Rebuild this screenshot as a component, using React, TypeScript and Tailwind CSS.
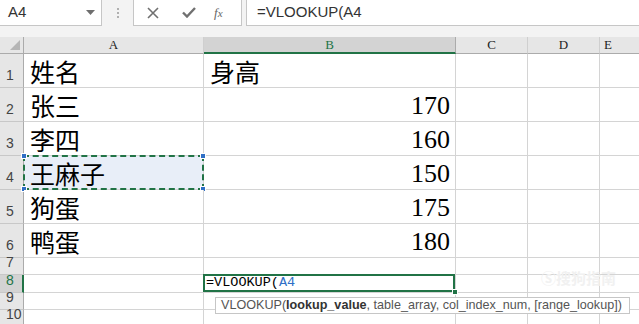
import React from 'react';

const ROWS: { a: string; b: string; num?: boolean }[] = [
  { a: '姓名', b: '身高' },
  { a: '张三', b: '170', num: true },
  { a: '李四', b: '160', num: true },
  { a: '王麻子', b: '150', num: true },
  { a: '狗蛋', b: '175', num: true },
  { a: '鸭蛋', b: '180', num: true },
];

const cjk = { fontFamily: '"Noto Sans CJK SC", sans-serif' };
const serif = { fontFamily: '"Liberation Serif", serif' };
const sans = { fontFamily: '"Liberation Sans", Arial, sans-serif' };
const mono = { fontFamily: '"Liberation Mono", monospace' };

const Handle: React.FC<{ className: string }> = ({ className }) => (
  <div className={`absolute w-[6px] h-[6px] bg-[#2f6fc6] border border-white ${className}`} />
);

const RowHead: React.FC<{ n: number; h: string; active?: boolean }> = ({ n, h, active }) => (
  <div
    className={`${h} flex items-end pl-[6px] pb-[1px] text-[14px] border-b border-[#c8c8c8] ${
      active ? 'bg-[#d3d3d3] text-[#217346] border-r-2 border-r-[#217346]' : 'bg-[#e6e6e6] text-[#444] border-r border-r-[#ababab]'
    }`}
    style={sans}
  >
    {n}
  </div>
);

const Blank: React.FC<{ h: string }> = ({ h }) => <div className={`${h} border-r border-b border-[#d4d4d4] bg-white`} />;

export default function App() {
  return (
    <div className="w-[639px] h-[324px] overflow-hidden bg-white relative select-none">
      {/* formula bar */}
      <div className="h-[37px] bg-[#f3f3f3] flex items-start">
        <div className="w-[102px] h-[26px] bg-white border-r border-b border-[#c6c6c6] flex items-center justify-between pl-[8px] pr-[6px]">
          <span className="text-[15px] text-[#333]" style={sans}>A4</span>
          <svg width="9" height="5" viewBox="0 0 9 5"><path d="M0 0h9L4.5 5z" fill="#6e6e6e" /></svg>
        </div>
        <div className="w-[31px] h-[26px] flex flex-col items-center justify-center gap-[2px]">
          <div className="w-[2px] h-[2px] bg-[#b0b0b0]" />
          <div className="w-[2px] h-[2px] bg-[#b0b0b0]" />
          <div className="w-[2px] h-[2px] bg-[#b0b0b0]" />
        </div>
        <div className="w-[109px] h-[26px] bg-white border-l border-r border-b border-[#c6c6c6] flex items-center">
          <svg className="ml-[13px]" width="12" height="12" viewBox="0 0 12 12">
            <path d="M1 1l10 10M11 1L1 11" stroke="#707070" strokeWidth="1.6" />
          </svg>
          <svg className="ml-[23px]" width="14" height="11" viewBox="0 0 14 11">
            <path d="M1 5.5l4 4L13 1" stroke="#707070" strokeWidth="2.4" fill="none" />
          </svg>
          <span className="ml-[18px] text-[13px] italic text-[#666]" style={serif}>
            f<span className="text-[11px]">x</span>
          </span>
        </div>
        <div className="flex-1 ml-[4px] h-[26px] bg-white border-l border-b border-[#c6c6c6] flex items-center pl-[10px]">
          <span className="text-[15px] text-[#333]" style={sans}>=VLOOKUP(A4</span>
        </div>
      </div>

      {/* sheet grid */}
      <div className="grid grid-cols-[24px_180px_252px_72px_72px_1fr]">
        {/* column headers */}
        <div className="h-[17px] bg-[#e6e6e6] border-r border-b border-[#ababab] relative">
          <svg className="absolute right-[3px] bottom-[3px]" width="10" height="10" viewBox="0 0 10 10">
            <path d="M10 0v10H0z" fill="#b5b5b5" />
          </svg>
        </div>
        <div className="h-[17px] bg-[#e6e6e6] border-r border-[#cfcfcf] border-b border-b-[#ababab] flex items-center justify-center text-[13px] text-[#222]" style={serif}>A</div>
        <div className="h-[17px] bg-[#d3d3d3] border-r border-[#ababab] border-b-2 border-b-[#217346] flex items-center justify-center text-[13px] text-[#217346]" style={serif}>B</div>
        <div className="h-[17px] bg-[#e6e6e6] border-r border-[#cfcfcf] border-b border-b-[#ababab] flex items-center justify-center text-[13px] text-[#222]" style={serif}>C</div>
        <div className="h-[17px] bg-[#e6e6e6] border-r border-[#cfcfcf] border-b border-b-[#ababab] flex items-center justify-center text-[13px] text-[#222]" style={serif}>D</div>
        <div className="h-[17px] bg-[#e6e6e6] border-b border-[#ababab] flex items-center pl-[4px] text-[13px] text-[#222]" style={serif}>E</div>

        {ROWS.map((r, i) => (
          <React.Fragment key={i}>
            <RowHead n={i + 1} h="h-[34px]" />
            <div
              className={`h-[34px] border-r border-b border-[#d4d4d4] relative flex items-end pl-[6px] text-[25px] leading-[32px] text-black ${
                i === 3 ? 'bg-[#e8eef8]' : 'bg-white'
              }`}
              style={cjk}
            >
              {r.a}
              {i === 3 && (
                <>
                  <div className="absolute inset-[-1px] border-2 border-dashed border-[#217346]" />
                  <Handle className="-left-[3px] -top-[3px]" />
                  <Handle className="-right-[3px] -top-[3px]" />
                  <Handle className="-left-[3px] -bottom-[3px]" />
                  <Handle className="-right-[3px] -bottom-[3px]" />
                </>
              )}
            </div>
            <div
              className={`h-[34px] border-r border-b border-[#d4d4d4] flex items-end text-black ${
                r.num ? 'justify-end pr-[5px] text-[26px] leading-[30px]' : 'pl-[6px] text-[25px] leading-[32px]'
              }`}
              style={r.num ? serif : cjk}
            >
              {r.b}
            </div>
            <Blank h="h-[34px]" />
            <Blank h="h-[34px]" />
            <div className="h-[34px] border-b border-[#d4d4d4]" />
          </React.Fragment>
        ))}

        {[7, 8, 9, 10].map((n) => {
          const h = n === 8 ? 'h-[18px]' : 'h-[17px]';
          return (
            <React.Fragment key={n}>
              <RowHead n={n} h={h} active={n === 8} />
              <Blank h={h} />
              {n === 8 ? (
                <div className={`${h} border-r border-b border-[#d4d4d4] relative`}>
                  <div className="absolute -left-[1px] -top-[1px] right-0 bottom-0 border-2 border-[#217346] flex items-center pl-[1px]">
                    <span className="text-[13.5px] leading-none text-black" style={mono}>
                      =VLOOKUP(<span className="text-[#2f6fc6]">A4</span>
                    </span>
                  </div>
                  <div className="absolute -right-[3px] -bottom-[3px] w-[6px] h-[6px] bg-[#217346] border border-white" />
                </div>
              ) : (
                <Blank h={h} />
              )}
              <Blank h={h} />
              <Blank h={h} />
              <div className={`${h} border-b border-[#d4d4d4]`} />
            </React.Fragment>
          );
        })}
      </div>

      {/* watermark */}
      <div className="absolute left-[541px] top-[267px] text-[15px] font-bold text-[#f1f1f1]" style={cjk}>
        Ⓢ搜狗指南
      </div>

      {/* function tooltip */}
      <div
        className="absolute left-[215px] top-[297px] w-[415px] h-[17px] bg-white border border-[#c6c6c6] flex items-center pl-[5px] text-[12.6px] text-[#555] whitespace-nowrap"
        style={sans}
      >
        VLOOKUP(<b className="text-[#333]">lookup_value</b>, table_array, col_index_num, [range_lookup])
      </div>
    </div>
  );
}
